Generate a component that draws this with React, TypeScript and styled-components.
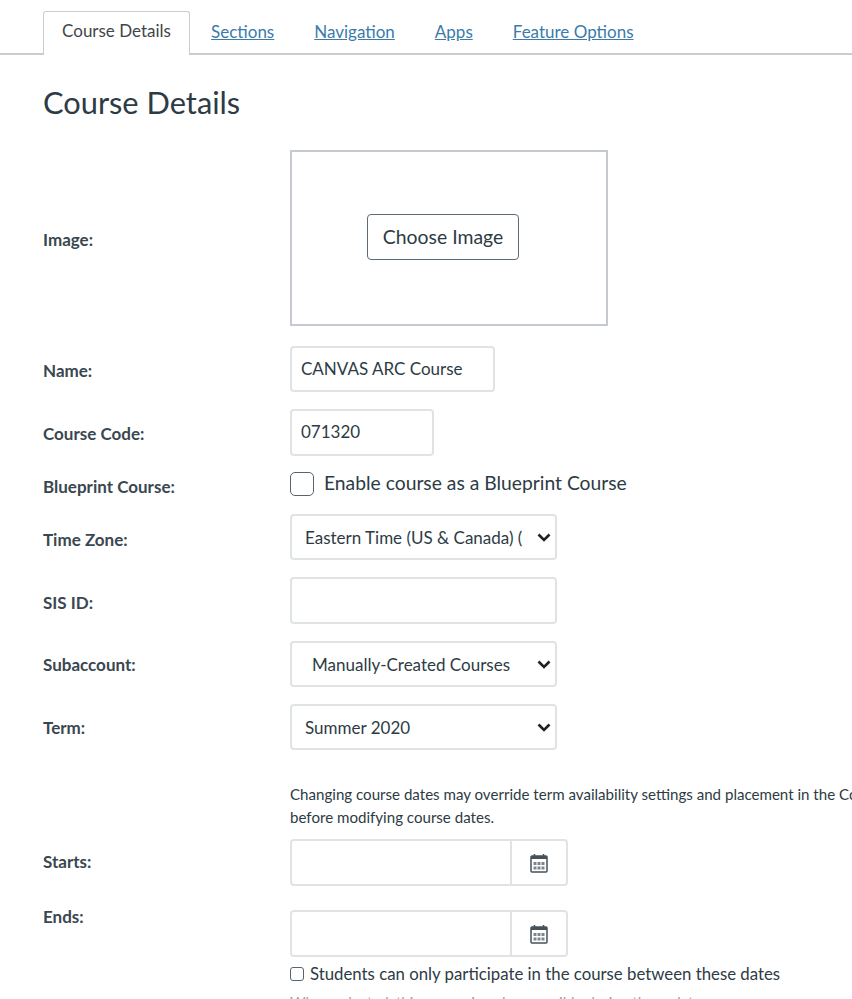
import React from 'react'
import styled, { createGlobalStyle } from 'styled-components'

const chevron =
  "data:image/svg+xml,%3Csvg xmlns='http://www.w3.org/2000/svg' width='14' height='9' viewBox='0 0 14 9'%3E%3Cpath d='M1.500 1.500L7 7l5.500-5.500' fill='none' stroke='%23222' stroke-width='2.600'/%3E%3C/svg%3E"

const GlobalStyle = createGlobalStyle`
  html, body {
    margin: 0;
    padding: 0;
    height: 999px;
    overflow: hidden;
    background: #fff;
    font-family: Lato, "Open Sans", sans-serif;
    color: #2d3b45;
  }
`

const Page = styled.div`
  height: 999px;
  overflow: hidden;
`

const Tabs = styled.nav`
  display: flex;
  align-items: flex-end;
  height: 55px;
  box-sizing: border-box;
  padding: 11px 0 0 43px;
  border-bottom: 2px solid #c7cdd1;
`

const ActiveTab = styled.div`
  box-sizing: border-box;
  width: 147px;
  height: 44px;
  margin-bottom: -2px;
  padding-top: 7px;
  text-align: center;
  font-size: 17px;
  line-height: 24px;
  color: #3f4649;
  background: #fff;
  border: 1px solid #c7cdd1;
  border-bottom: none;
  border-radius: 3px 3px 0 0;
`

const TabLink = styled.a<{ $gap: number }>`
  margin-left: ${(p) => p.$gap}px;
  margin-bottom: 9px;
  font-size: 17px;
  line-height: 24px;
  color: #3a7bab;
  text-decoration: underline;
`

const Content = styled.main`
  padding-left: 43px;
`

const Heading = styled.h1`
  margin: 28px 0 0;
  font-size: 30.8px;
  line-height: 40px;
  font-weight: 400;
  color: #2d3b45;
`

const Row = styled.div<{ $top: number }>`
  display: grid;
  grid-template-columns: 247px 1fr;
  align-items: center;
  margin-top: ${(p) => p.$top}px;
`

const Label = styled.label<{ $shift?: number }>`
  font-size: 17px;
  line-height: 22px;
  font-weight: 700;
  color: #3a4750;
  position: relative;
  top: ${(p) => p.$shift || 0}px;
`

const ImageBox = styled.div`
  box-sizing: border-box;
  width: 318px;
  height: 176px;
  display: flex;
  align-items: center;
  justify-content: center;
  border: 2px solid #c4cacf;
`

const ChooseButton = styled.button`
  box-sizing: border-box;
  width: 152px;
  height: 46px;
  margin: 0 12px 2px 0;
  padding: 0 0 2px;
  font-family: inherit;
  font-size: 19.4px;
  color: #2d3b45;
  background: #fff;
  border: 1px solid #5d6b77;
  border-radius: 4px;
`

const TextInput = styled.input<{ $width: number; $height?: number }>`
  box-sizing: border-box;
  width: ${(p) => p.$width}px;
  height: ${(p) => p.$height || 47}px;
  padding: 0 9px 2px;
  font-family: inherit;
  font-size: 17px;
  color: #2d3b45;
  background: #fff;
  border: 2px solid #e0e3e5;
  border-radius: 4px;
  outline: none;
`

const Select = styled.select<{ $indent?: number }>`
  box-sizing: border-box;
  width: 267px;
  height: 46px;
  padding: 0 32px 0 ${(p) => p.$indent || 13}px;
  font-family: inherit;
  font-size: 17px;
  color: #2d3b45;
  appearance: none;
  background: #fff url("${chevron}") no-repeat right 4px center;
  border: 2px solid #e0e3e5;
  border-radius: 4px;
  outline: none;
`

const CheckRow = styled.div<{ $gap: number }>`
  display: flex;
  align-items: center;
  gap: ${(p) => p.$gap}px;
`

const CheckBox = styled.span<{ $size: number; $radius: number }>`
  box-sizing: border-box;
  flex: none;
  width: ${(p) => p.$size}px;
  height: ${(p) => p.$size}px;
  background: #fff;
  border: 1.5px solid #56646f;
  border-radius: ${(p) => p.$radius}px;
`

const BlueprintText = styled.span`
  font-size: 19.3px;
  line-height: 21px;
  color: #2d3b45;
  margin-left: 1px;
  padding-bottom: 3px;
`

const ParticipateText = styled.span`
  font-size: 16.8px;
  line-height: 22px;
  color: #2d3b45;
`

const Note = styled.p`
  grid-column: 2;
  margin: 0;
  font-size: 15.1px;
  line-height: 23px;
  color: #2d3b45;
  white-space: nowrap;
`

const DateField = styled.div`
  display: flex;
  box-sizing: border-box;
  width: 278px;
  height: 47px;
  background: #fff;
  border: 2px solid #e0e3e5;
  border-radius: 4px;
`

const DateInput = styled.div`
  flex: 1;
  border-right: 2px solid #e0e3e5;
`

const DateIcon = styled.div`
  flex: none;
  width: 54px;
  display: flex;
  align-items: center;
  justify-content: center;
`

const Faded = styled.p`
  grid-column: 2;
  margin: 0;
  font-size: 15px;
  line-height: 20px;
  color: #9aa2a8;
  white-space: nowrap;
`

const CalendarIcon = () => (
  <svg width="18" height="20" viewBox="0 0 18 20" fill="none">
    <rect x="1" y="3" width="16" height="16" rx="1" stroke="#46525b" strokeWidth="1.500" />
    <rect x="1" y="3" width="16" height="3" fill="#46525b" />
    <path d="M4.500 1v3M13.500 1v3" stroke="#46525b" strokeWidth="1.500" />
    <path
      d="M3.500 9h3v3h-3zM7.500 9h3v3h-3zM11.500 9h3v3h-3zM3.500 13.500h3v3h-3zM7.500 13.500h3v3h-3zM11.500 13.500h3v3h-3z"
      fill="#7b868e"
    />
  </svg>
)

export default function App() {
  return (
    <Page>
      <GlobalStyle />
      <Tabs>
        <ActiveTab>Course Details</ActiveTab>
        <TabLink $gap={21}>Sections</TabLink>
        <TabLink $gap={40}>Navigation</TabLink>
        <TabLink $gap={40}>Apps</TabLink>
        <TabLink $gap={40}>Feature Options</TabLink>
      </Tabs>
      <Content>
        <Heading>Course Details</Heading>
        <Row $top={27}>
          <Label $shift={2}>Image:</Label>
          <ImageBox>
            <ChooseButton>Choose Image</ChooseButton>
          </ImageBox>
        </Row>
        <Row $top={20}>
          <Label $shift={2}>Name:</Label>
          <TextInput $width={205} $height={46} defaultValue="CANVAS ARC Course" />
        </Row>
        <Row $top={17}>
          <Label $shift={1}>Course Code:</Label>
          <TextInput $width={144} defaultValue="071320" />
        </Row>
        <Row $top={16}>
          <Label $shift={3}>Blueprint Course:</Label>
          <CheckRow $gap={9}>
            <CheckBox $size={24} $radius={5} />
            <BlueprintText>Enable course as a Blueprint Course</BlueprintText>
          </CheckRow>
        </Row>
        <Row $top={18}>
          <Label $shift={3}>Time Zone:</Label>
          <Select defaultValue="et">
            <option value="et">Eastern Time (US &amp; Canada) (-05:00)</option>
          </Select>
        </Row>
        <Row $top={17}>
          <Label $shift={2}>SIS ID:</Label>
          <TextInput $width={267} />
        </Row>
        <Row $top={17}>
          <Label $shift={1}>Subaccount:</Label>
          <Select $indent={20} defaultValue="mc">
            <option value="mc">Manually-Created Courses</option>
          </Select>
        </Row>
        <Row $top={17}>
          <Label $shift={1}>Term:</Label>
          <Select defaultValue="su">
            <option value="su">Summer 2020</option>
          </Select>
        </Row>
        <Row $top={33}>
          <Note>
            Changing course dates may override term availability settings and placement in the Courses list. Review
            <br />
            before modifying course dates.
          </Note>
        </Row>
        <Row $top={10}>
          <Label $shift={-1}>Starts:</Label>
          <DateField>
            <DateInput />
            <DateIcon>
              <CalendarIcon />
            </DateIcon>
          </DateField>
        </Row>
        <Row $top={24}>
          <Label $shift={-17}>Ends:</Label>
          <DateField>
            <DateInput />
            <DateIcon>
              <CalendarIcon />
            </DateIcon>
          </DateField>
        </Row>
        <Row $top={6}>
          <span />
          <CheckRow $gap={6}>
            <CheckBox $size={14} $radius={3} />
            <ParticipateText>Students can only participate in the course between these dates</ParticipateText>
          </CheckRow>
        </Row>
        <Row $top={7}>
          <Faded>When selected, this course is only accessible during these dates</Faded>
        </Row>
      </Content>
    </Page>
  )
}
